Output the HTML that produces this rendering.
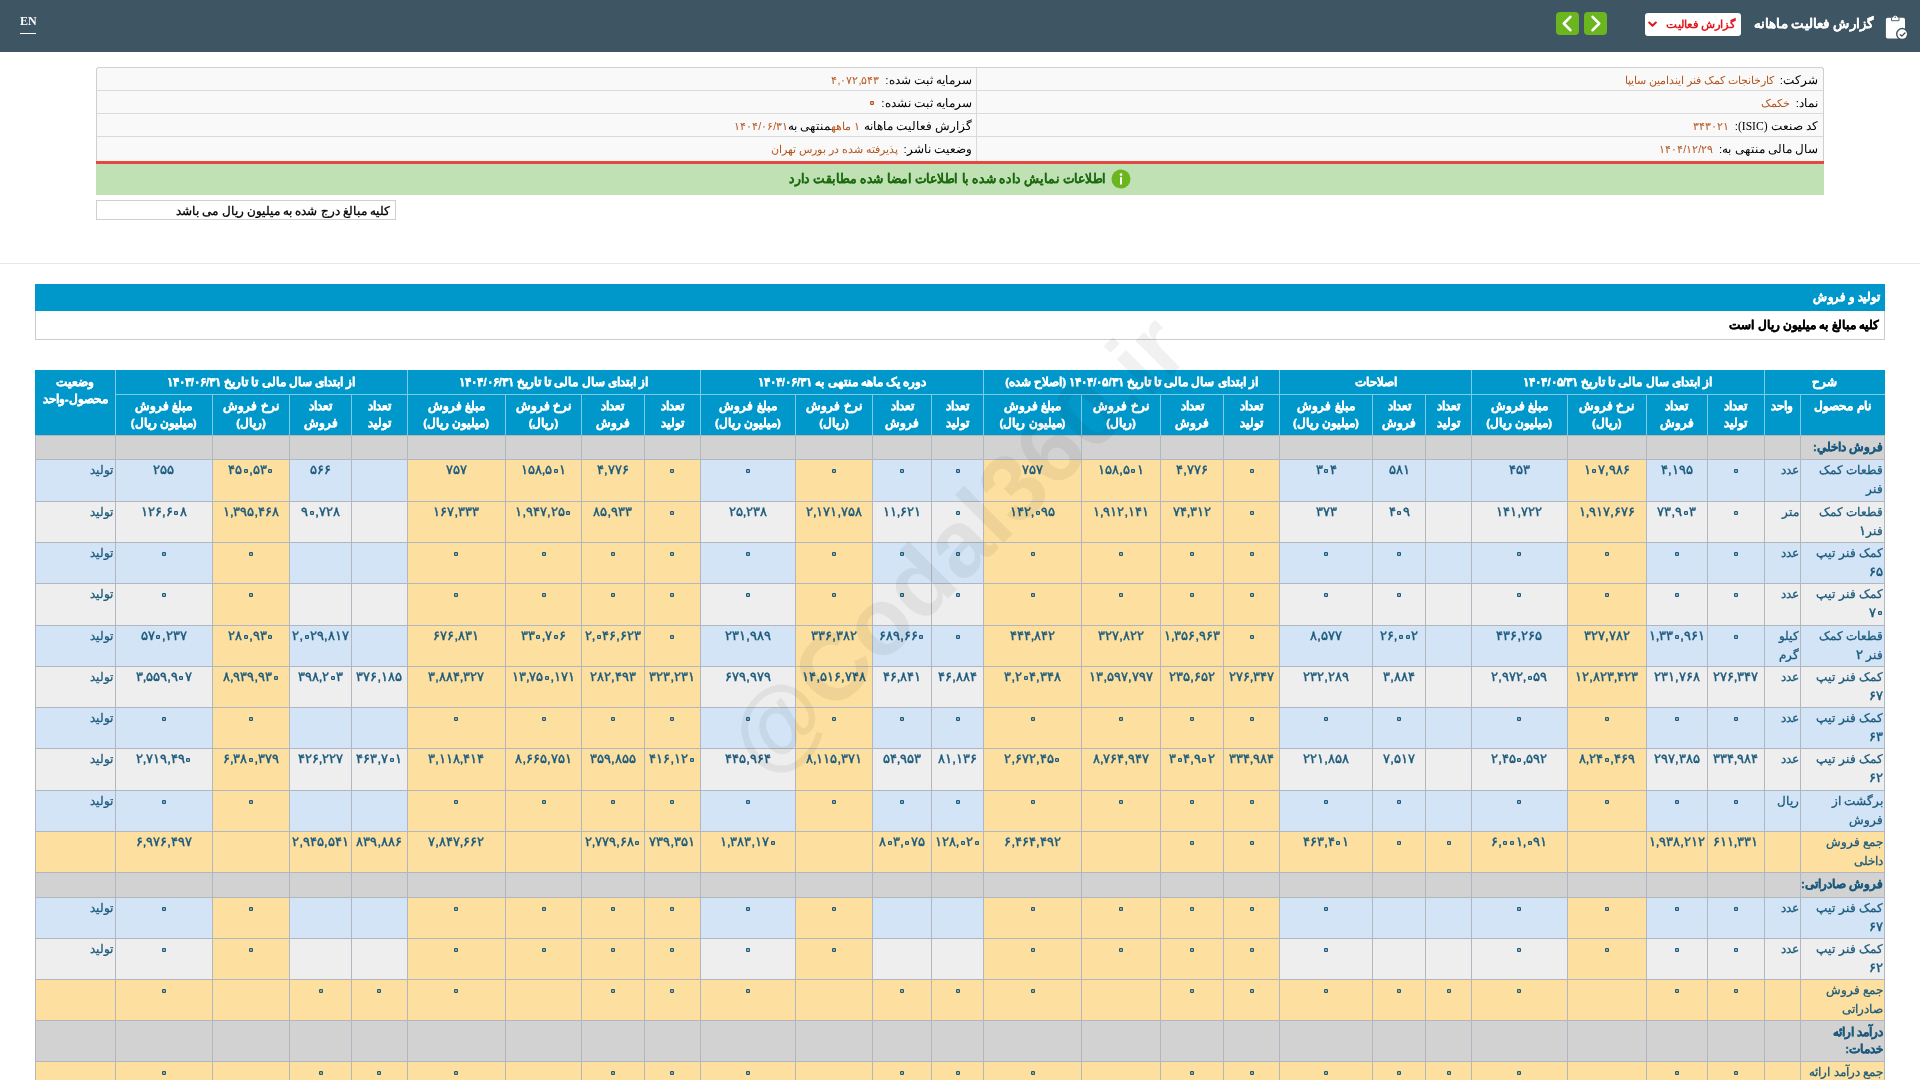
<!DOCTYPE html>
<html lang="fa" dir="rtl">
<head>
<meta charset="utf-8">
<title>گزارش فعالیت ماهانه</title>
<style>
*{box-sizing:border-box}
html,body{margin:0;padding:0}
body{width:1920px;height:1080px;overflow:hidden;background:#fff;font-family:"Liberation Sans",sans-serif;font-size:12px;color:#000;position:relative;direction:rtl}
.abs{position:absolute}
.sx{display:inline-block;transform-origin:right center}
#page{position:absolute;left:0;top:0;width:1920px;height:1080px;overflow:hidden;will-change:transform}
#topbar{left:0;top:0;width:1920px;height:52px;background:#3e5564}
#en{left:20px;top:14px;width:16px;height:20px;color:#fff;font-family:"Liberation Serif",serif;font-weight:bold;font-size:12px;line-height:15px;text-align:center;border-bottom:1px solid #fff;direction:ltr}
#ttl{right:47px;top:12px;height:24px;line-height:24px;color:#fff;font-weight:bold;font-size:13px;white-space:nowrap;-webkit-text-stroke:0.15px #fff}
#dd{left:1645px;top:13px;width:96px;height:23px;background:#fff;border-radius:3px;color:#e0181d;font-weight:bold;font-size:11px;line-height:22px;white-space:nowrap;padding-right:6px;text-align:right}
.gb{top:12px;width:23px;height:23px;background:#6bb51f;border-radius:4px}
#info{left:96px;top:67px;width:1728px;height:94px;background:#f9f9f9;border:1px solid #cfcfcf;border-bottom:none;border-radius:3px 3px 0 0}
.ir{position:absolute;left:0;right:0;height:23px;border-bottom:1px solid #dadada;line-height:24px;white-space:nowrap;font-size:11.6px}
.ic{position:absolute;top:0;height:23px;padding-right:5px;text-align:right}
.ic b{font-weight:normal;color:#b4551e;margin-right:6px;font-size:10.6px}
.ic u{display:inline-block;width:6px;height:6px;background:radial-gradient(circle at center,rgba(180,85,30,0) 0.45px,#b4551e 1.05px,#b4551e 1.95px,rgba(180,85,30,0) 2.5px);font-size:0;overflow:hidden;vertical-align:1px;text-decoration:none}
.ic i{font-style:normal;color:#b4551e;font-size:10.6px}
#red{left:96px;top:161px;width:1728px;height:3px;background:#e8463f}
#green{left:96px;top:164px;width:1728px;height:31px;padding-right:9px;background:#bfe1b4;text-align:center;color:#1d6a10;font-weight:bold;font-size:12.5px;line-height:30px;white-space:nowrap;-webkit-text-stroke:0.1px #1d6a10}
#note{left:96px;top:200px;width:300px;height:20px;border:1px solid #cfcfcf;background:#fff;font-weight:normal;font-size:11.6px;line-height:19px;-webkit-text-stroke:0.3px #000;padding-right:5px;text-align:right;white-space:nowrap}
#hr{left:0;top:263px;width:1920px;height:1px;background:#e6e6e6}
#sect{left:35px;top:284px;width:1850px;height:27px;background:#0098cb;color:#fff;font-weight:bold;font-size:12px;-webkit-text-stroke:0.4px #fff;line-height:26px;padding-right:5px;text-align:right;white-space:nowrap}
#sub{left:35px;top:311px;width:1850px;height:29px;background:#fff;border:1px solid #ccc;border-top:none;font-weight:bold;font-size:12px;line-height:28px;padding-right:5px;-webkit-text-stroke:0.35px #000;text-align:right;white-space:nowrap}
#tbl{left:35px;top:370px;width:1850px;border-collapse:collapse;table-layout:fixed;direction:rtl;color:#1c5a7c;font-size:12px}
#tbl th,#tbl td{padding:0;border:1px solid #b2b7bf;overflow:hidden;vertical-align:top;text-align:center;font-weight:normal}
#tbl th{background:#0098cb;color:#fff;font-weight:bold;border-color:#7dcbe6;font-size:11.5px;-webkit-text-stroke:0.4px #fff}
#tbl tr.h2 th,#tbl th.st{border-bottom-color:#b2b7bf}
#tbl tr.h1 th{border-top-color:#0098cb}
#tbl tr.h1 th:first-child,#tbl tr.h2 th:first-child{border-right-color:#0098cb}
#tbl th.st{border-left-color:#0098cb}
#tbl th div{line-height:17.4px;overflow:hidden;white-space:nowrap}
#tbl tr.h1 th div{height:23px;padding-top:3px}
#tbl tr.h2 th div{height:40px;padding-top:2.5px}
#tbl tr.h1 th.st div{height:64px;padding-top:3px}
#tbl td div{line-height:18.6px;padding:1px 3px 0 3px;overflow:hidden;white-space:nowrap;-webkit-text-stroke:0.3px #1c5a7c}
#tbl td.n div{direction:ltr;unicode-bidi:bidi-override;font-size:13px;padding-left:0;padding-right:0;-webkit-text-stroke:0.45px #1c5a7c}
#tbl td.nm s{display:inline-block;direction:ltr;unicode-bidi:bidi-override;white-space:nowrap;text-decoration:none;font-size:13px;-webkit-text-stroke:0.45px #1c5a7c}
#tbl td.n i,#tbl td.nm i{display:inline-block;width:6px;height:6px;background:radial-gradient(circle at center,rgba(28,90,124,0) 0.45px,#1c5a7c 1.05px,#1c5a7c 1.95px,rgba(28,90,124,0) 2.5px);font-size:0;overflow:hidden;vertical-align:0.5px;margin:0 0.5px}
#tbl td.nm div{white-space:normal;text-align:right;padding-right:1px;padding-left:2px}
#tbl td.un div{white-space:normal;text-align:right;padding-right:1px;padding-left:1px}
#tbl td.stt div{text-align:right;padding-right:2px}
tr.odd td{background:#d2e4f6}
tr.even td{background:#eeeeee}
tr.sum td,#tbl td.yy{background:#fde09f}
tr.sec td{background:#d2d2d2}
#tbl tr.sec td.nm div{font-weight:bold;padding-top:3px;line-height:17.4px;white-space:nowrap;font-size:11.5px;-webkit-text-stroke:0.4px #1c5a7c}
#wm{left:956px;top:544px;width:0;height:0;overflow:visible;direction:ltr}
#wm span{position:absolute;left:-400px;top:-60px;width:800px;height:120px;line-height:120px;text-align:center;font-family:"Liberation Sans",sans-serif;font-weight:bold;font-size:94.5px;color:rgba(0,0,0,0.055);transform:rotate(-45deg);white-space:nowrap}
</style>
</head>
<body>
<div id="page">
<div id="topbar" class="abs"></div>
<div id="en" class="abs">EN</div>
<svg class="abs" style="left:1876px;top:8px" width="40" height="38" viewBox="0 0 40 38">
<rect x="9.9" y="9.7" width="19.1" height="20.9" rx="1.8" fill="#fff"/>
<path d="M15.5 12.7V10.1c0-.5.3-.8.8-.8h.4a2.6 2.6 0 0 1 5.100000000000001 0h.4c.5 0 .8.3.8.8v2.6z" fill="#fff" stroke="#3e5564" stroke-width="0.9"/>
<circle cx="19.2" cy="9.2" r="0.75" fill="#3e5564"/>
<circle cx="26.2" cy="26.05" r="6.2" fill="#3e5564"/>
<circle cx="26.2" cy="26.05" r="4.8" fill="#fff"/>
<path d="M24.2 26.6l1.6 1.5 3.1-3.1" fill="none" stroke="#444" stroke-width="1.3" stroke-linecap="round" stroke-linejoin="round"/>
</svg>
<div id="ttl" class="abs"><span class="sx" style="transform:scaleX(1.027)">گزارش فعالیت ماهانه</span></div>
<div id="dd" class="abs"><span class="sx" style="transform:scaleX(1.056)">گزارش فعالیت</span><svg style="position:absolute;left:3px;top:8px" width="9" height="7" viewBox="0 0 9 7"><path d="M1.2 1.5l3.3 3.3 3.3-3.3" fill="none" stroke="#e0181d" stroke-width="2" stroke-linecap="round" stroke-linejoin="round"/></svg></div>
<div class="abs gb" style="left:1584px"><svg width="23" height="23" viewBox="0 0 23 23"><path d="M8.6 4.8l6.6 6.7-6.6 6.7" fill="none" stroke="#fff" stroke-width="2.6" stroke-linecap="round" stroke-linejoin="round"/></svg></div>
<div class="abs gb" style="left:1556px"><svg width="23" height="23" viewBox="0 0 23 23"><path d="M14.4 4.8l-6.6 6.7 6.6 6.7" fill="none" stroke="#fff" stroke-width="2.6" stroke-linecap="round" stroke-linejoin="round"/></svg></div>

<div id="info" class="abs">
 <div class="ir" style="top:0"><div class="ic" style="right:0;width:847px">شرکت:<b>کارخانجات کمک فنر ایندامین سایپا</b></div><div class="ic" style="right:846px;width:880px;padding-right:4px;border-right:1px solid #dadada">سرمایه ثبت شده:<b>۴,۰۷۲,۵۴۳</b></div></div>
 <div class="ir" style="top:23px"><div class="ic" style="right:0;width:847px">نماد:<b>خکمک</b></div><div class="ic" style="right:846px;width:880px;padding-right:4px;border-right:1px solid #dadada">سرمایه ثبت نشده:<b><u>۰</u></b></div></div>
 <div class="ir" style="top:46px"><div class="ic" style="right:0;width:847px">کد صنعت <span style="font-family:'Liberation Serif',serif">(ISIC)</span>:<b>۳۴۳۰۲۱</b></div><div class="ic" style="right:846px;width:880px;padding-right:4px;border-right:1px solid #dadada">گزارش فعالیت ماهانه <i>۱ ماهه</i>منتهی به<i>۱۴۰۴/۰۶/۳۱</i></div></div>
 <div class="ir" style="top:69px;height:25px;border-bottom:none"><div class="ic" style="right:0;width:847px">سال مالی منتهی به:<b>۱۴۰۴/۱۲/۲۹</b></div><div class="ic" style="right:846px;width:880px;padding-right:4px;border-right:1px solid #dadada;height:25px">وضعیت ناشر:<b>پذیرفته شده در بورس تهران</b></div></div>
</div>
<div id="red" class="abs"></div>
<div id="green" class="abs"><svg style="vertical-align:middle;margin-left:-4px;position:relative;top:-1px" width="20" height="20" viewBox="0 0 20 20"><circle cx="10" cy="10" r="9.5" fill="#6bb51f"/><circle cx="10" cy="5.6" r="1.3" fill="#fff"/><rect x="9" y="8" width="2" height="7.5" rx="0.6" fill="#fff"/></svg><span class="sx" style="transform:scaleX(.945);transform-origin:center">اطلاعات نمایش داده شده با اطلاعات امضا شده مطابقت دارد</span></div>
<div id="note" class="abs">کلیه مبالغ درج شده به میلیون ریال می باشد</div>
<div id="hr" class="abs"></div>
<div id="sect" class="abs"><span class="sx" style="transform:scaleX(.953)">تولید و فروش</span></div>
<div id="sub" class="abs">کلیه مبالغ به میلیون ریال است</div>
<table id="tbl" class="abs">
<colgroup><col style="width:84px"><col style="width:36.5px"><col style="width:57px"><col style="width:60.5px"><col style="width:79.5px"><col style="width:95.5px"><col style="width:46px"><col style="width:53px"><col style="width:93px"><col style="width:56px"><col style="width:63px"><col style="width:79px"><col style="width:98px"><col style="width:52px"><col style="width:59px"><col style="width:77px"><col style="width:95px"><col style="width:56.5px"><col style="width:62.5px"><col style="width:76px"><col style="width:98.5px"><col style="width:55.5px"><col style="width:62px"><col style="width:77px"><col style="width:97.5px"><col style="width:79.5px"></colgroup>
<thead>
<tr class="h1"><th colspan="2"><div>شرح</div></th><th colspan="4"><div>از ابتدای سال مالی تا تاریخ ۱۴۰۴/۰۵/۳۱</div></th><th colspan="3"><div>اصلاحات</div></th><th colspan="4"><div>از ابتدای سال مالی تا تاریخ ۱۴۰۴/۰۵/۳۱ (اصلاح شده)</div></th><th colspan="4"><div>دوره یک ماهه منتهی به ۱۴۰۴/۰۶/۳۱</div></th><th colspan="4"><div>از ابتدای سال مالی تا تاریخ ۱۴۰۴/۰۶/۳۱</div></th><th colspan="4"><div>از ابتدای سال مالی تا تاریخ ۱۴۰۳/۰۶/۳۱</div></th><th rowspan="2" class="st"><div>وضعیت<br>محصول-واحد</div></th></tr>
<tr class="h2"><th><div>نام محصول</div></th><th><div>واحد</div></th><th><div>تعداد<br>تولید</div></th><th><div>تعداد<br>فروش</div></th><th><div>نرخ فروش<br>(ریال)</div></th><th><div>مبلغ فروش<br>(میلیون ریال)</div></th><th><div>تعداد<br>تولید</div></th><th><div>تعداد<br>فروش</div></th><th><div>مبلغ فروش<br>(میلیون ریال)</div></th><th><div>تعداد<br>تولید</div></th><th><div>تعداد<br>فروش</div></th><th><div>نرخ فروش<br>(ریال)</div></th><th><div>مبلغ فروش<br>(میلیون ریال)</div></th><th><div>تعداد<br>تولید</div></th><th><div>تعداد<br>فروش</div></th><th><div>نرخ فروش<br>(ریال)</div></th><th><div>مبلغ فروش<br>(میلیون ریال)</div></th><th><div>تعداد<br>تولید</div></th><th><div>تعداد<br>فروش</div></th><th><div>نرخ فروش<br>(ریال)</div></th><th><div>مبلغ فروش<br>(میلیون ریال)</div></th><th><div>تعداد<br>تولید</div></th><th><div>تعداد<br>فروش</div></th><th><div>نرخ فروش<br>(ریال)</div></th><th><div>مبلغ فروش<br>(میلیون ریال)</div></th></tr>
</thead><tbody>
<tr class="sec" style="height:24px"><td class="nm"><div style="height:23px">فروش داخلي:</div></td><td></td><td></td><td></td><td></td><td></td><td></td><td></td><td></td><td></td><td></td><td></td><td></td><td></td><td></td><td></td><td></td><td></td><td></td><td></td><td></td><td></td><td></td><td></td><td></td><td></td></tr>
<tr class="odd" style="height:42px"><td class="nm"><div style="height:41px">قطعات کمک فنر</div></td><td class="un"><div style="height:41px">عدد</div></td><td class="n"><div style="height:41px"><i>۰</i></div></td><td class="n"><div style="height:41px">۴,۱۹۵</div></td><td class="n yy"><div style="height:41px">۱<i>۰</i>۷,۹۸۶</div></td><td class="n"><div style="height:41px">۴۵۳</div></td><td class="n"><div style="height:41px"></div></td><td class="n"><div style="height:41px">۵۸۱</div></td><td class="n"><div style="height:41px">۳<i>۰</i>۴</div></td><td class="n yy"><div style="height:41px"><i>۰</i></div></td><td class="n yy"><div style="height:41px">۴,۷۷۶</div></td><td class="n yy"><div style="height:41px">۱۵۸,۵<i>۰</i>۱</div></td><td class="n yy"><div style="height:41px">۷۵۷</div></td><td class="n"><div style="height:41px"><i>۰</i></div></td><td class="n"><div style="height:41px"><i>۰</i></div></td><td class="n yy"><div style="height:41px"><i>۰</i></div></td><td class="n"><div style="height:41px"><i>۰</i></div></td><td class="n yy"><div style="height:41px"><i>۰</i></div></td><td class="n yy"><div style="height:41px">۴,۷۷۶</div></td><td class="n yy"><div style="height:41px">۱۵۸,۵<i>۰</i>۱</div></td><td class="n yy"><div style="height:41px">۷۵۷</div></td><td class="n"><div style="height:41px"></div></td><td class="n"><div style="height:41px">۵۶۶</div></td><td class="n yy"><div style="height:41px">۴۵<i>۰</i>,۵۳<i>۰</i></div></td><td class="n"><div style="height:41px">۲۵۵</div></td><td class="stt"><div style="height:41px">تولید</div></td></tr>
<tr class="even" style="height:41px"><td class="nm"><div style="height:40px">قطعات کمک فنر<s>۱</s></div></td><td class="un"><div style="height:40px">متر</div></td><td class="n"><div style="height:40px"><i>۰</i></div></td><td class="n"><div style="height:40px">۷۳,۹<i>۰</i>۳</div></td><td class="n yy"><div style="height:40px">۱,۹۱۷,۶۷۶</div></td><td class="n"><div style="height:40px">۱۴۱,۷۲۲</div></td><td class="n"><div style="height:40px"></div></td><td class="n"><div style="height:40px">۴<i>۰</i>۹</div></td><td class="n"><div style="height:40px">۳۷۳</div></td><td class="n yy"><div style="height:40px"><i>۰</i></div></td><td class="n yy"><div style="height:40px">۷۴,۳۱۲</div></td><td class="n yy"><div style="height:40px">۱,۹۱۲,۱۴۱</div></td><td class="n yy"><div style="height:40px">۱۴۲,<i>۰</i>۹۵</div></td><td class="n"><div style="height:40px"><i>۰</i></div></td><td class="n"><div style="height:40px">۱۱,۶۲۱</div></td><td class="n yy"><div style="height:40px">۲,۱۷۱,۷۵۸</div></td><td class="n"><div style="height:40px">۲۵,۲۳۸</div></td><td class="n yy"><div style="height:40px"><i>۰</i></div></td><td class="n yy"><div style="height:40px">۸۵,۹۳۳</div></td><td class="n yy"><div style="height:40px">۱,۹۴۷,۲۵<i>۰</i></div></td><td class="n yy"><div style="height:40px">۱۶۷,۳۳۳</div></td><td class="n"><div style="height:40px"></div></td><td class="n"><div style="height:40px">۹<i>۰</i>,۷۲۸</div></td><td class="n yy"><div style="height:40px">۱,۳۹۵,۴۶۸</div></td><td class="n"><div style="height:40px">۱۲۶,۶<i>۰</i>۸</div></td><td class="stt"><div style="height:40px">تولید</div></td></tr>
<tr class="odd" style="height:41px"><td class="nm"><div style="height:40px">کمک فنر تیپ <s>۶۵</s></div></td><td class="un"><div style="height:40px">عدد</div></td><td class="n"><div style="height:40px"><i>۰</i></div></td><td class="n"><div style="height:40px"><i>۰</i></div></td><td class="n yy"><div style="height:40px"><i>۰</i></div></td><td class="n"><div style="height:40px"><i>۰</i></div></td><td class="n"><div style="height:40px"></div></td><td class="n"><div style="height:40px"><i>۰</i></div></td><td class="n"><div style="height:40px"><i>۰</i></div></td><td class="n yy"><div style="height:40px"><i>۰</i></div></td><td class="n yy"><div style="height:40px"><i>۰</i></div></td><td class="n yy"><div style="height:40px"><i>۰</i></div></td><td class="n yy"><div style="height:40px"><i>۰</i></div></td><td class="n"><div style="height:40px"><i>۰</i></div></td><td class="n"><div style="height:40px"><i>۰</i></div></td><td class="n yy"><div style="height:40px"><i>۰</i></div></td><td class="n"><div style="height:40px"><i>۰</i></div></td><td class="n yy"><div style="height:40px"><i>۰</i></div></td><td class="n yy"><div style="height:40px"><i>۰</i></div></td><td class="n yy"><div style="height:40px"><i>۰</i></div></td><td class="n yy"><div style="height:40px"><i>۰</i></div></td><td class="n"><div style="height:40px"></div></td><td class="n"><div style="height:40px"></div></td><td class="n yy"><div style="height:40px"><i>۰</i></div></td><td class="n"><div style="height:40px"><i>۰</i></div></td><td class="stt"><div style="height:40px">تولید</div></td></tr>
<tr class="even" style="height:42px"><td class="nm"><div style="height:41px">کمک فنر تیپ <s>۷<i>۰</i></s></div></td><td class="un"><div style="height:41px">عدد</div></td><td class="n"><div style="height:41px"><i>۰</i></div></td><td class="n"><div style="height:41px"><i>۰</i></div></td><td class="n yy"><div style="height:41px"><i>۰</i></div></td><td class="n"><div style="height:41px"><i>۰</i></div></td><td class="n"><div style="height:41px"></div></td><td class="n"><div style="height:41px"><i>۰</i></div></td><td class="n"><div style="height:41px"><i>۰</i></div></td><td class="n yy"><div style="height:41px"><i>۰</i></div></td><td class="n yy"><div style="height:41px"><i>۰</i></div></td><td class="n yy"><div style="height:41px"><i>۰</i></div></td><td class="n yy"><div style="height:41px"><i>۰</i></div></td><td class="n"><div style="height:41px"><i>۰</i></div></td><td class="n"><div style="height:41px"><i>۰</i></div></td><td class="n yy"><div style="height:41px"><i>۰</i></div></td><td class="n"><div style="height:41px"><i>۰</i></div></td><td class="n yy"><div style="height:41px"><i>۰</i></div></td><td class="n yy"><div style="height:41px"><i>۰</i></div></td><td class="n yy"><div style="height:41px"><i>۰</i></div></td><td class="n yy"><div style="height:41px"><i>۰</i></div></td><td class="n"><div style="height:41px"></div></td><td class="n"><div style="height:41px"></div></td><td class="n yy"><div style="height:41px"><i>۰</i></div></td><td class="n"><div style="height:41px"><i>۰</i></div></td><td class="stt"><div style="height:41px">تولید</div></td></tr>
<tr class="odd" style="height:41px"><td class="nm"><div style="height:40px">قطعات کمک فنر <s>۲</s></div></td><td class="un"><div style="height:40px">کیلو گرم</div></td><td class="n"><div style="height:40px"><i>۰</i></div></td><td class="n"><div style="height:40px">۱,۳۳<i>۰</i>,۹۶۱</div></td><td class="n yy"><div style="height:40px">۳۲۷,۷۸۲</div></td><td class="n"><div style="height:40px">۴۳۶,۲۶۵</div></td><td class="n"><div style="height:40px"></div></td><td class="n"><div style="height:40px">۲۶,<i>۰</i><i>۰</i>۲</div></td><td class="n"><div style="height:40px">۸,۵۷۷</div></td><td class="n yy"><div style="height:40px"><i>۰</i></div></td><td class="n yy"><div style="height:40px">۱,۳۵۶,۹۶۳</div></td><td class="n yy"><div style="height:40px">۳۲۷,۸۲۲</div></td><td class="n yy"><div style="height:40px">۴۴۴,۸۴۲</div></td><td class="n"><div style="height:40px"><i>۰</i></div></td><td class="n"><div style="height:40px">۶۸۹,۶۶<i>۰</i></div></td><td class="n yy"><div style="height:40px">۳۳۶,۳۸۲</div></td><td class="n"><div style="height:40px">۲۳۱,۹۸۹</div></td><td class="n yy"><div style="height:40px"><i>۰</i></div></td><td class="n yy"><div style="height:40px">۲,<i>۰</i>۴۶,۶۲۳</div></td><td class="n yy"><div style="height:40px">۳۳<i>۰</i>,۷<i>۰</i>۶</div></td><td class="n yy"><div style="height:40px">۶۷۶,۸۳۱</div></td><td class="n"><div style="height:40px"></div></td><td class="n"><div style="height:40px">۲,<i>۰</i>۲۹,۸۱۷</div></td><td class="n yy"><div style="height:40px">۲۸<i>۰</i>,۹۳<i>۰</i></div></td><td class="n"><div style="height:40px">۵۷<i>۰</i>,۲۳۷</div></td><td class="stt"><div style="height:40px">تولید</div></td></tr>
<tr class="even" style="height:41px"><td class="nm"><div style="height:40px">کمک فنر تیپ <s>۶۷</s></div></td><td class="un"><div style="height:40px">عدد</div></td><td class="n"><div style="height:40px">۲۷۶,۳۴۷</div></td><td class="n"><div style="height:40px">۲۳۱,۷۶۸</div></td><td class="n yy"><div style="height:40px">۱۲,۸۲۳,۴۲۳</div></td><td class="n"><div style="height:40px">۲,۹۷۲,<i>۰</i>۵۹</div></td><td class="n"><div style="height:40px"></div></td><td class="n"><div style="height:40px">۳,۸۸۴</div></td><td class="n"><div style="height:40px">۲۳۲,۲۸۹</div></td><td class="n yy"><div style="height:40px">۲۷۶,۳۴۷</div></td><td class="n yy"><div style="height:40px">۲۳۵,۶۵۲</div></td><td class="n yy"><div style="height:40px">۱۳,۵۹۷,۷۹۷</div></td><td class="n yy"><div style="height:40px">۳,۲<i>۰</i>۴,۳۴۸</div></td><td class="n"><div style="height:40px">۴۶,۸۸۴</div></td><td class="n"><div style="height:40px">۴۶,۸۴۱</div></td><td class="n yy"><div style="height:40px">۱۴,۵۱۶,۷۴۸</div></td><td class="n"><div style="height:40px">۶۷۹,۹۷۹</div></td><td class="n yy"><div style="height:40px">۳۲۳,۲۳۱</div></td><td class="n yy"><div style="height:40px">۲۸۲,۴۹۳</div></td><td class="n yy"><div style="height:40px">۱۳,۷۵<i>۰</i>,۱۷۱</div></td><td class="n yy"><div style="height:40px">۳,۸۸۴,۳۲۷</div></td><td class="n"><div style="height:40px">۳۷۶,۱۸۵</div></td><td class="n"><div style="height:40px">۳۹۸,۲<i>۰</i>۳</div></td><td class="n yy"><div style="height:40px">۸,۹۳۹,۹۳<i>۰</i></div></td><td class="n"><div style="height:40px">۳,۵۵۹,۹<i>۰</i>۷</div></td><td class="stt"><div style="height:40px">تولید</div></td></tr>
<tr class="odd" style="height:41px"><td class="nm"><div style="height:40px">کمک فنر تیپ <s>۶۳</s></div></td><td class="un"><div style="height:40px">عدد</div></td><td class="n"><div style="height:40px"><i>۰</i></div></td><td class="n"><div style="height:40px"><i>۰</i></div></td><td class="n yy"><div style="height:40px"><i>۰</i></div></td><td class="n"><div style="height:40px"><i>۰</i></div></td><td class="n"><div style="height:40px"></div></td><td class="n"><div style="height:40px"><i>۰</i></div></td><td class="n"><div style="height:40px"><i>۰</i></div></td><td class="n yy"><div style="height:40px"><i>۰</i></div></td><td class="n yy"><div style="height:40px"><i>۰</i></div></td><td class="n yy"><div style="height:40px"><i>۰</i></div></td><td class="n yy"><div style="height:40px"><i>۰</i></div></td><td class="n"><div style="height:40px"><i>۰</i></div></td><td class="n"><div style="height:40px"><i>۰</i></div></td><td class="n yy"><div style="height:40px"><i>۰</i></div></td><td class="n"><div style="height:40px"><i>۰</i></div></td><td class="n yy"><div style="height:40px"><i>۰</i></div></td><td class="n yy"><div style="height:40px"><i>۰</i></div></td><td class="n yy"><div style="height:40px"><i>۰</i></div></td><td class="n yy"><div style="height:40px"><i>۰</i></div></td><td class="n"><div style="height:40px"></div></td><td class="n"><div style="height:40px"></div></td><td class="n yy"><div style="height:40px"><i>۰</i></div></td><td class="n"><div style="height:40px"><i>۰</i></div></td><td class="stt"><div style="height:40px">تولید</div></td></tr>
<tr class="even" style="height:42px"><td class="nm"><div style="height:41px">کمک فنر تیپ <s>۶۲</s></div></td><td class="un"><div style="height:41px">عدد</div></td><td class="n"><div style="height:41px">۳۳۴,۹۸۴</div></td><td class="n"><div style="height:41px">۲۹۷,۳۸۵</div></td><td class="n yy"><div style="height:41px">۸,۲۴<i>۰</i>,۴۶۹</div></td><td class="n"><div style="height:41px">۲,۴۵<i>۰</i>,۵۹۲</div></td><td class="n"><div style="height:41px"></div></td><td class="n"><div style="height:41px">۷,۵۱۷</div></td><td class="n"><div style="height:41px">۲۲۱,۸۵۸</div></td><td class="n yy"><div style="height:41px">۳۳۴,۹۸۴</div></td><td class="n yy"><div style="height:41px">۳<i>۰</i>۴,۹<i>۰</i>۲</div></td><td class="n yy"><div style="height:41px">۸,۷۶۴,۹۴۷</div></td><td class="n yy"><div style="height:41px">۲,۶۷۲,۴۵<i>۰</i></div></td><td class="n"><div style="height:41px">۸۱,۱۳۶</div></td><td class="n"><div style="height:41px">۵۴,۹۵۳</div></td><td class="n yy"><div style="height:41px">۸,۱۱۵,۳۷۱</div></td><td class="n"><div style="height:41px">۴۴۵,۹۶۴</div></td><td class="n yy"><div style="height:41px">۴۱۶,۱۲<i>۰</i></div></td><td class="n yy"><div style="height:41px">۳۵۹,۸۵۵</div></td><td class="n yy"><div style="height:41px">۸,۶۶۵,۷۵۱</div></td><td class="n yy"><div style="height:41px">۳,۱۱۸,۴۱۴</div></td><td class="n"><div style="height:41px">۴۶۳,۷<i>۰</i>۱</div></td><td class="n"><div style="height:41px">۴۲۶,۲۲۷</div></td><td class="n yy"><div style="height:41px">۶,۳۸<i>۰</i>,۳۷۹</div></td><td class="n"><div style="height:41px">۲,۷۱۹,۴۹<i>۰</i></div></td><td class="stt"><div style="height:41px">تولید</div></td></tr>
<tr class="odd" style="height:41px"><td class="nm"><div style="height:40px">برگشت از فروش</div></td><td class="un"><div style="height:40px">ریال</div></td><td class="n"><div style="height:40px"><i>۰</i></div></td><td class="n"><div style="height:40px"><i>۰</i></div></td><td class="n yy"><div style="height:40px"><i>۰</i></div></td><td class="n"><div style="height:40px"><i>۰</i></div></td><td class="n"><div style="height:40px"></div></td><td class="n"><div style="height:40px"><i>۰</i></div></td><td class="n"><div style="height:40px"><i>۰</i></div></td><td class="n yy"><div style="height:40px"><i>۰</i></div></td><td class="n yy"><div style="height:40px"><i>۰</i></div></td><td class="n yy"><div style="height:40px"><i>۰</i></div></td><td class="n yy"><div style="height:40px"><i>۰</i></div></td><td class="n"><div style="height:40px"><i>۰</i></div></td><td class="n"><div style="height:40px"><i>۰</i></div></td><td class="n yy"><div style="height:40px"><i>۰</i></div></td><td class="n"><div style="height:40px"><i>۰</i></div></td><td class="n yy"><div style="height:40px"><i>۰</i></div></td><td class="n yy"><div style="height:40px"><i>۰</i></div></td><td class="n yy"><div style="height:40px"><i>۰</i></div></td><td class="n yy"><div style="height:40px"><i>۰</i></div></td><td class="n"><div style="height:40px"></div></td><td class="n"><div style="height:40px"></div></td><td class="n yy"><div style="height:40px"><i>۰</i></div></td><td class="n"><div style="height:40px"><i>۰</i></div></td><td class="stt"><div style="height:40px">تولید</div></td></tr>
<tr class="sum" style="height:41px"><td class="nm"><div style="height:40px">جمع فروش داخلی</div></td><td class="un"><div style="height:40px"></div></td><td class="n"><div style="height:40px">۶۱۱,۳۳۱</div></td><td class="n"><div style="height:40px">۱,۹۳۸,۲۱۲</div></td><td class="n"><div style="height:40px"></div></td><td class="n"><div style="height:40px">۶,<i>۰</i><i>۰</i>۱,<i>۰</i>۹۱</div></td><td class="n"><div style="height:40px"><i>۰</i></div></td><td class="n"><div style="height:40px"><i>۰</i></div></td><td class="n"><div style="height:40px">۴۶۳,۴<i>۰</i>۱</div></td><td class="n"><div style="height:40px"><i>۰</i></div></td><td class="n"><div style="height:40px"><i>۰</i></div></td><td class="n"><div style="height:40px"></div></td><td class="n"><div style="height:40px">۶,۴۶۴,۴۹۲</div></td><td class="n"><div style="height:40px">۱۲۸,<i>۰</i>۲<i>۰</i></div></td><td class="n"><div style="height:40px">۸<i>۰</i>۳,<i>۰</i>۷۵</div></td><td class="n"><div style="height:40px"></div></td><td class="n"><div style="height:40px">۱,۳۸۳,۱۷<i>۰</i></div></td><td class="n"><div style="height:40px">۷۳۹,۳۵۱</div></td><td class="n"><div style="height:40px">۲,۷۷۹,۶۸<i>۰</i></div></td><td class="n"><div style="height:40px"></div></td><td class="n"><div style="height:40px">۷,۸۴۷,۶۶۲</div></td><td class="n"><div style="height:40px">۸۳۹,۸۸۶</div></td><td class="n"><div style="height:40px">۲,۹۴۵,۵۴۱</div></td><td class="n"><div style="height:40px"></div></td><td class="n"><div style="height:40px">۶,۹۷۶,۴۹۷</div></td><td class="stt"><div style="height:40px"></div></td></tr>
<tr class="sec" style="height:25px"><td class="nm"><div style="height:24px">فروش صادراتی:</div></td><td></td><td></td><td></td><td></td><td></td><td></td><td></td><td></td><td></td><td></td><td></td><td></td><td></td><td></td><td></td><td></td><td></td><td></td><td></td><td></td><td></td><td></td><td></td><td></td><td></td></tr>
<tr class="odd" style="height:41px"><td class="nm"><div style="height:40px">کمک فنر تیپ <s>۶۷</s></div></td><td class="un"><div style="height:40px">عدد</div></td><td class="n"><div style="height:40px"><i>۰</i></div></td><td class="n"><div style="height:40px"><i>۰</i></div></td><td class="n yy"><div style="height:40px"><i>۰</i></div></td><td class="n"><div style="height:40px"><i>۰</i></div></td><td class="n"><div style="height:40px"></div></td><td class="n"><div style="height:40px"></div></td><td class="n"><div style="height:40px"><i>۰</i></div></td><td class="n yy"><div style="height:40px"><i>۰</i></div></td><td class="n yy"><div style="height:40px"><i>۰</i></div></td><td class="n yy"><div style="height:40px"><i>۰</i></div></td><td class="n yy"><div style="height:40px"><i>۰</i></div></td><td class="n"><div style="height:40px"></div></td><td class="n"><div style="height:40px"></div></td><td class="n yy"><div style="height:40px"><i>۰</i></div></td><td class="n"><div style="height:40px"><i>۰</i></div></td><td class="n yy"><div style="height:40px"><i>۰</i></div></td><td class="n yy"><div style="height:40px"><i>۰</i></div></td><td class="n yy"><div style="height:40px"><i>۰</i></div></td><td class="n yy"><div style="height:40px"><i>۰</i></div></td><td class="n"><div style="height:40px"></div></td><td class="n"><div style="height:40px"></div></td><td class="n yy"><div style="height:40px"><i>۰</i></div></td><td class="n"><div style="height:40px"><i>۰</i></div></td><td class="stt"><div style="height:40px">تولید</div></td></tr>
<tr class="even" style="height:41px"><td class="nm"><div style="height:40px">کمک فنر تیپ <s>۶۲</s></div></td><td class="un"><div style="height:40px">عدد</div></td><td class="n"><div style="height:40px"><i>۰</i></div></td><td class="n"><div style="height:40px"><i>۰</i></div></td><td class="n yy"><div style="height:40px"><i>۰</i></div></td><td class="n"><div style="height:40px"><i>۰</i></div></td><td class="n"><div style="height:40px"></div></td><td class="n"><div style="height:40px"></div></td><td class="n"><div style="height:40px"><i>۰</i></div></td><td class="n yy"><div style="height:40px"><i>۰</i></div></td><td class="n yy"><div style="height:40px"><i>۰</i></div></td><td class="n yy"><div style="height:40px"><i>۰</i></div></td><td class="n yy"><div style="height:40px"><i>۰</i></div></td><td class="n"><div style="height:40px"></div></td><td class="n"><div style="height:40px"></div></td><td class="n yy"><div style="height:40px"><i>۰</i></div></td><td class="n"><div style="height:40px"><i>۰</i></div></td><td class="n yy"><div style="height:40px"><i>۰</i></div></td><td class="n yy"><div style="height:40px"><i>۰</i></div></td><td class="n yy"><div style="height:40px"><i>۰</i></div></td><td class="n yy"><div style="height:40px"><i>۰</i></div></td><td class="n"><div style="height:40px"></div></td><td class="n"><div style="height:40px"></div></td><td class="n yy"><div style="height:40px"><i>۰</i></div></td><td class="n"><div style="height:40px"><i>۰</i></div></td><td class="stt"><div style="height:40px">تولید</div></td></tr>
<tr class="sum" style="height:41px"><td class="nm"><div style="height:40px">جمع فروش صادراتی</div></td><td class="un"><div style="height:40px"></div></td><td class="n"><div style="height:40px"><i>۰</i></div></td><td class="n"><div style="height:40px"><i>۰</i></div></td><td class="n"><div style="height:40px"></div></td><td class="n"><div style="height:40px"><i>۰</i></div></td><td class="n"><div style="height:40px"><i>۰</i></div></td><td class="n"><div style="height:40px"><i>۰</i></div></td><td class="n"><div style="height:40px"><i>۰</i></div></td><td class="n"><div style="height:40px"><i>۰</i></div></td><td class="n"><div style="height:40px"><i>۰</i></div></td><td class="n"><div style="height:40px"></div></td><td class="n"><div style="height:40px"><i>۰</i></div></td><td class="n"><div style="height:40px"><i>۰</i></div></td><td class="n"><div style="height:40px"><i>۰</i></div></td><td class="n"><div style="height:40px"></div></td><td class="n"><div style="height:40px"><i>۰</i></div></td><td class="n"><div style="height:40px"><i>۰</i></div></td><td class="n"><div style="height:40px"><i>۰</i></div></td><td class="n"><div style="height:40px"></div></td><td class="n"><div style="height:40px"><i>۰</i></div></td><td class="n"><div style="height:40px"><i>۰</i></div></td><td class="n"><div style="height:40px"><i>۰</i></div></td><td class="n"><div style="height:40px"></div></td><td class="n"><div style="height:40px"><i>۰</i></div></td><td class="stt"><div style="height:40px"></div></td></tr>
<tr class="sec" style="height:41px"><td class="nm"><div style="height:40px">درآمد ارائه<br>خدمات:</div></td><td></td><td></td><td></td><td></td><td></td><td></td><td></td><td></td><td></td><td></td><td></td><td></td><td></td><td></td><td></td><td></td><td></td><td></td><td></td><td></td><td></td><td></td><td></td><td></td><td></td></tr>
<tr class="sum" style="height:41px"><td class="nm"><div style="height:40px">جمع درآمد ارائه خدمات</div></td><td class="un"><div style="height:40px"></div></td><td class="n"><div style="height:40px"><i>۰</i></div></td><td class="n"><div style="height:40px"><i>۰</i></div></td><td class="n"><div style="height:40px"></div></td><td class="n"><div style="height:40px"><i>۰</i></div></td><td class="n"><div style="height:40px"><i>۰</i></div></td><td class="n"><div style="height:40px"><i>۰</i></div></td><td class="n"><div style="height:40px"><i>۰</i></div></td><td class="n"><div style="height:40px"><i>۰</i></div></td><td class="n"><div style="height:40px"><i>۰</i></div></td><td class="n"><div style="height:40px"></div></td><td class="n"><div style="height:40px"><i>۰</i></div></td><td class="n"><div style="height:40px"><i>۰</i></div></td><td class="n"><div style="height:40px"><i>۰</i></div></td><td class="n"><div style="height:40px"></div></td><td class="n"><div style="height:40px"><i>۰</i></div></td><td class="n"><div style="height:40px"><i>۰</i></div></td><td class="n"><div style="height:40px"><i>۰</i></div></td><td class="n"><div style="height:40px"></div></td><td class="n"><div style="height:40px"><i>۰</i></div></td><td class="n"><div style="height:40px"><i>۰</i></div></td><td class="n"><div style="height:40px"><i>۰</i></div></td><td class="n"><div style="height:40px"></div></td><td class="n"><div style="height:40px"><i>۰</i></div></td><td class="stt"><div style="height:40px"></div></td></tr>
</tbody>
</table>
<div id="wm" class="abs"><span>@Codal360.ir</span></div>
</div>
</body>
</html>
